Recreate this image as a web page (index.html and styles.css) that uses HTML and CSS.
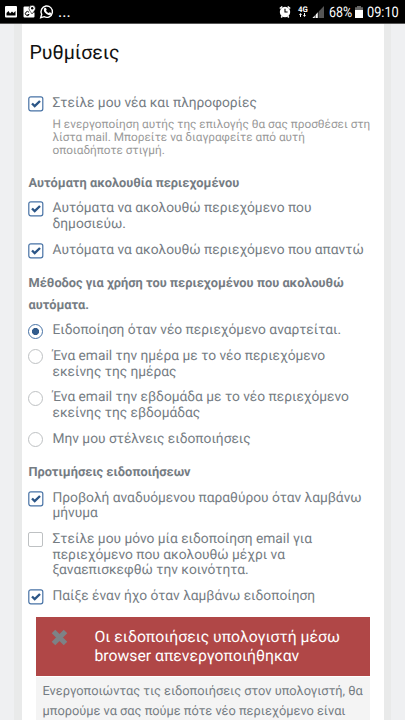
FILE: index.html
```html
<!DOCTYPE html>
<html lang="el">
<head>
<meta charset="utf-8">
<title>Ρυθμίσεις</title>
<link rel="stylesheet" href="styles.css">
</head>
<body>
<header class="status">
  <svg class="left-icons" width="54" height="24" viewBox="0 0 54 24">
    <path fill="#fff" fill-rule="evenodd" d="M1 6h10q1 0 1 1v9.500q0 1-1 1H1q-1 0-1-1V7q0-1 1-1zM1.500 15.500h9V11l-2 2-1.500-1.500-2 2-1.500-2.500-2 2z"/>
    <path fill="#fff" d="M19.500 6.500h5v3l3 3h2v4q0 1-1 1h-9q-1 0-1-1v-9q0-1 1-1z"/>
    <path fill="#fff" stroke="#000" stroke-width=".6" d="M27 14c-1-2-3-3.500-3-5.500a3.200 3.200 0 0 1 6.400 0c0 2-2 3.500-3.400 5.500z"/>
    <circle cx="27.200" cy="8.300" r="1.200"/>
    <path fill="none" stroke="#000" d="M24 12.300a2 2 0 1 0 .2 2.200h-1.700"/>
    <path fill="none" stroke="#fff" stroke-width="1.400" d="M35.700 17.700l1-3.400a5.700 5.700 0 1 1 2.400 2.400z"/>
    <path fill="#fff" d="M39 8.500l1-.7 1 .3.700 1.700-.7 1q1 1.700 2.700 2.300l1-.8 1.700.8-.2 1.300q-2 1.600-4.700-.3Q38 11.500 39 8.500z"/>
  </svg>
  <span class="dots">...</span>
  <svg class="right-icons" width="46" height="24" viewBox="0 0 46 24">
    <path fill="none" stroke="#fff" stroke-width="1.600" d="M.8 8.500l2.500-2M11.200 8.500l-2.500-2M2.200 17.500l1-1.300M9.800 17.500l-1-1.300"/>
    <circle cx="6" cy="12" r="5.200" fill="#fff"/>
    <path fill="none" stroke="#000" stroke-width="1.100" d="M6 8.800V12h2.600"/>
    <text x="19" y="11.700" class="network">4G</text>
    <path fill="#fff" d="M20 15l1.500-2 1.500 2h-1v2h-1v-2zM24 15h1v-2h1v2h1l-1.500 2z"/>
    <path fill="#555" d="M45 6v12H33.500z"/>
    <path fill="#fff" d="M39 12.200V18H33.500z"/>
    <path stroke="#000" stroke-width=".7" d="M36.200 6v12M39.200 6v12"/>
  </svg>
  <span class="percent">68%</span>
  <svg class="battery" width="8" height="24" viewBox="0 0 8 24"><path fill="#666" d="M2 6h4v1.300h2v4H0v-4h2z"/><path fill="#fff" d="M0 10h8v8H0z"/></svg>
  <span class="clock">09:10</span>
</header>
<svg class="defs" width="0" height="0"><symbol id="check" viewBox="0 0 16 16"><rect x=".8" y=".8" width="14" height="14" rx="2" fill="#fff" stroke="#4772a5" stroke-width="1.200"/><path d="M4 7.500l2.700 2.600L12 5" fill="none" stroke="#2c5687" stroke-width="2.400"/></symbol></svg>
<div class="frame">
<main class="page">
  <h1>Ρυθμίσεις</h1>
  <div class="options">
    <label class="option"><svg class="mark"><use href="#check"/></svg><span>Στείλε μου νέα και πληροφορίες</span></label>
  </div>
  <p class="help">Η ενεργοποίηση αυτής της επιλογής θα σας προσθέσει στη<br>λίστα mail. Μπορείτε να διαγραφείτε από αυτή<br>οποιαδήποτε στιγμή.</p>
  <h2>Αυτόματη ακολουθία περιεχομένου</h2>
  <div class="options">
    <label class="option"><svg class="mark"><use href="#check"/></svg><span>Αυτόματα να ακολουθώ περιεχόμενο που<br>δημοσιεύω.</span></label>
    <label class="option"><svg class="mark"><use href="#check"/></svg><span>Αυτόματα να ακολουθώ περιεχόμενο που απαντώ</span></label>
  </div>
  <h2>Μέθοδος για χρήση του περιεχομένου που ακολουθώ<br>αυτόματα.</h2>
  <div class="options">
    <label class="option"><i class="radio selected"></i><span>Ειδοποίηση όταν νέο περιεχόμενο αναρτείται.</span></label>
    <label class="option"><i class="radio"></i><span>Ένα email την ημέρα με το νέο περιεχόμενο<br>εκείνης της ημέρας</span></label>
    <label class="option"><i class="radio"></i><span>Ένα email την εβδομάδα με το νέο περιεχόμενο<br>εκείνης της εβδομάδας</span></label>
    <label class="option"><i class="radio"></i><span>Μην μου στέλνεις ειδοποιήσεις</span></label>
  </div>
  <h2>Προτιμήσεις ειδοποιήσεων</h2>
  <div class="options">
    <label class="option"><svg class="mark"><use href="#check"/></svg><span>Προβολή αναδυόμενου παραθύρου όταν λαμβάνω<br>μήνυμα</span></label>
    <label class="option"><i class="radio square"></i><span>Στείλε μου μόνο μία ειδοποίηση email για<br>περιεχόμενο που ακολουθώ μέχρι να<br>ξαναεπισκεφθώ την κοινότητα.</span></label>
    <label class="option"><svg class="mark"><use href="#check"/></svg><span>Παίξε έναν ήχο όταν λαμβάνω ειδοποίηση</span></label>
  </div>
  <section class="notice">
    <div class="alert">
      <svg class="cross" width="17" height="17" viewBox="0 0 17 17"><path d="M2.500 2.500l12 12M14.500 2.500l-12 12" stroke="#7d8286" stroke-width="5"/></svg>
      <p>Οι ειδοποιήσεις υπολογιστή μέσω<br>browser απενεργοποιήθηκαν</p>
    </div>
    <p class="info">Ενεργοποιώντας τις ειδοποιήσεις στον υπολογιστή, θα<br>μπορούμε να σας πούμε πότε νέο περιεχόμενο είναι</p>
  </section>
</main>
</div>
</body>
</html>
```
FILE: styles.css
```css
* { box-sizing: border-box; }
body {
  margin: 0;
  height: 720px;
  overflow: hidden;
  display: flex;
  flex-direction: column;
  background: #eff0f2;
  font-family: Roboto, "Noto Sans", sans-serif;
  color: #757c83;
  white-space: nowrap;
  text-rendering: geometricPrecision;
}
h1, h2, p { margin: 0; }
.defs { display: none; }
.status {
  flex: none;
  display: flex;
  height: 24px;
  padding-left: 5px;
  background: #000;
  border-bottom: 1px solid #555;
  color: #fff;
  line-height: 25px;
}
.status svg { flex: none; }
.dots { width: 215px; font-size: 16px; line-height: 23px; margin-left: -1px; }
.right-icons { margin-left: 6px; }
.network { fill: #fff; font-size: 7.8px; font-weight: 700; }
.percent, .clock { font-size: 14.5px; transform-origin: left; }
.percent { width: 26px; margin-left: 4px; transform: scaleX(.86); }
.battery { margin-left: 0; }
.clock { margin-left: 4px; transform: scaleX(.88); }
.frame {
  flex: 1;
  min-height: 0;
  margin: 0 14px;
  padding: 0 7px 0 8px;
  background: #e9eaea;
}
.page { height: 696px; padding-left: 6.5px; background: #fff; overflow: hidden; }
h1 {
  height: 71.3px;
  padding: 15px 0 0 1px;
  color: #111;
  font-size: 19.6px;
  font-weight: 400;
  line-height: 28px;
}
h2 {
  margin: 15.6px 0 6.5px;
  font-size: 12.8px;
  font-weight: 700;
  line-height: 21.33px;
}
.options { display: grid; row-gap: 10px; }
.option {
  display: grid;
  grid-template-columns: 15px 1fr;
  column-gap: 9px;
  font-size: 13.76px;
  line-height: 15.67px;
}
.option span { position: relative; top: .6px; }
.mark { width: 16px; height: 16px; margin: .6px 0 -2px -.5px; }
.radio {
  width: 15px;
  height: 15px;
  margin: 1px 0 -1px -.5px;
  border: 1px solid #bec1c3;
  border-radius: 50%;
  background: #fff;
}
.selected { border-color: #4772a5; background: radial-gradient(#315b8c 0 3.2px, #fff 3.9px); }
.square { border-radius: 2px; }
.help {
  margin: 7px 0 0 24px;
  padding-bottom: 1.1px;
  color: #999;
  font-size: 11.8px;
  line-height: 12.8px;
}
.notice { margin: 12.4px 14px 0 7px; background: #f4f4f4; }
.alert {
  display: flex;
  height: 60px;
  padding: 10px 0 0 15px;
  gap: 27px;
  background: #b04747;
  border-bottom: 1px solid #fff;
  color: #fff;
  font-size: 15.75px;
  line-height: 19.6px;
}
.cross { margin-top: 2px; }
.info { padding: 5.5px 0 0 7px; font-size: 12.8px; line-height: 19.8px; }
```
